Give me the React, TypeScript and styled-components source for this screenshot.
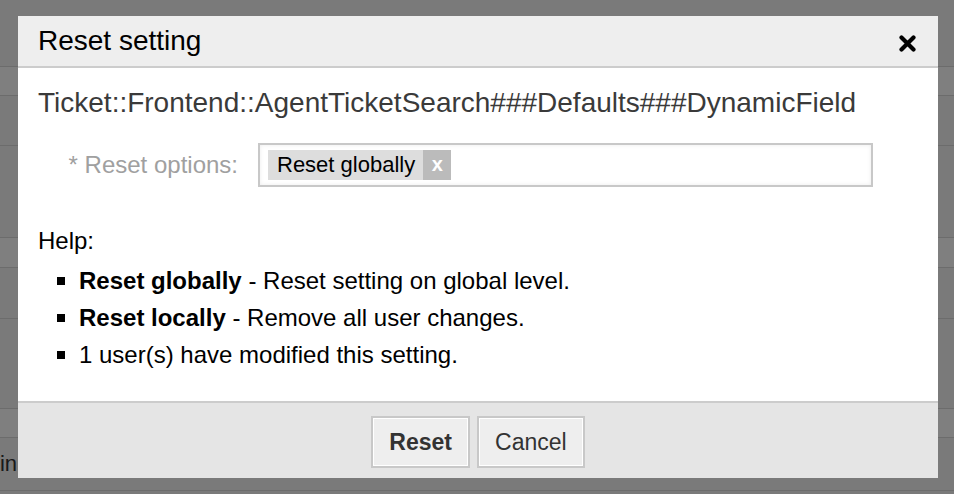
import React from 'react'
import styled, { createGlobalStyle } from 'styled-components'

const GlobalStyle = createGlobalStyle`
   html, body {
      margin: 0;
      padding: 0;
   }
   body {
      font-family: "Liberation Sans", Arial, Helvetica, sans-serif;
      background: #f4f4f4;
      overflow: hidden;
   }
`

// page behind the modal
export const Page = styled.div`
   display: flex;
   flex-flow: column;
   height: 100vh;
   background: #f4f4f4;
`
export const PageRow = styled.div<{ $h: number; $band?: boolean }>`
   display: flex;
   align-items: center;
   height: ${p => p.$h}px;
   flex-shrink: 0;
   background: ${p => (p.$band ? '#ffffff' : '#f4f4f4')};
   border-bottom: 1px solid #d8d8d8;
   box-sizing: border-box;
`
export const CutText = styled.div`
   display: flex;
   justify-content: flex-end;
   width: 17px;
   overflow: hidden;
   white-space: nowrap;
   font-size: 22px;
   color: #333;
`
export const Overlay = styled.div`
   position: fixed;
   inset: 0;
   background: rgba(0, 0, 0, 0.5);
`

// modal
export const Dialog = styled.div`
   position: fixed;
   left: 18px;
   top: 16px;
   width: 920px;
   background: #fff;
   display: flex;
   flex-flow: column;
`
export const Header = styled.div`
   display: flex;
   align-items: center;
   justify-content: space-between;
   height: 50px;
   padding: 0 22px 0 20px;
   background: #eeeeee;
   border-bottom: 2px solid #cccccc;
`
export const Title = styled.h1`
   margin: 0;
   font-size: 28px;
   font-weight: normal;
   color: #000;
`
export const CloseButton = styled.button`
   display: flex;
   padding: 0;
   margin-top: 4px;
   border: 0;
   background: none;
   cursor: pointer;
`
export const Content = styled.div`
   display: flex;
   flex-flow: column;
   padding: 18px 20px 28px;
`
export const SettingName = styled.div`
   font-size: 28px;
   line-height: 34px;
   color: #3a3a3a;
`
export const FieldRow = styled.div`
   display: flex;
   align-items: center;
   gap: 20px;
   margin-top: 23px;
`
export const Label = styled.label`
   width: 200px;
   text-align: right;
   font-size: 24px;
   color: #a0a0a0;
`
export const TagInput = styled.div`
   display: flex;
   align-items: center;
   width: 615px;
   height: 44px;
   box-sizing: border-box;
   padding: 0 8px;
   border: 2px solid #c8c8c8;
   box-shadow: inset 0 0 4px rgba(0, 0, 0, 0.08);
   background: #fff;
`
export const Tag = styled.span`
   display: flex;
   align-items: stretch;
   height: 30px;
   background: #dddddd;
   font-size: 22px;
   color: #000;
`
export const TagLabel = styled.span`
   display: flex;
   align-items: center;
   padding: 0 8px 0 9px;
`
export const TagRemove = styled.span`
   display: flex;
   align-items: center;
   justify-content: center;
   width: 28px;
   background: #bbbbbb;
   color: #fff;
   font-weight: bold;
   font-size: 20px;
   padding-bottom: 2px;
   box-sizing: border-box;
`
export const HelpTitle = styled.div`
   margin-top: 39px;
   font-size: 24px;
   line-height: 30px;
   color: #000;
`
export const HelpList = styled.ul`
   list-style: none;
   margin: 6px 0 0 19px;
   padding: 0;
`
export const HelpItem = styled.li`
   display: flex;
   align-items: center;
   height: 37px;
   font-size: 24px;
   color: #000;
   white-space: pre;
   &::before {
      content: '';
      width: 8px;
      height: 8px;
      margin-right: 14px;
      background: #000;
      flex-shrink: 0;
   }
`
export const Footer = styled.div`
   display: flex;
   justify-content: center;
   gap: 7px;
   padding: 13px 0 10px;
   background: #e5e5e5;
   border-top: 2px solid #cccccc;
`
export const Button = styled.button<{ $primary?: boolean }>`
   height: 52px;
   padding: 0 16px;
   border: 2px solid #c8c8c8;
   box-shadow: inset 0 0 0 1px #fff;
   background: #eeeeee;
   font-family: inherit;
   font-size: 23px;
   font-weight: ${p => (p.$primary ? 'bold' : 'normal')};
   color: #333;
   cursor: pointer;
`

const CloseIcon = () => (
   <svg width="17" height="17" viewBox="0 0 17 17">
      <path d="M2.5 2.5 L14.5 14.5 M14.5 2.5 L2.5 14.5" stroke="#000" strokeWidth="4.2" strokeLinecap="round" />
   </svg>
)

const background: Array<{ h: number; band?: boolean; text?: string }> = [
   { h: 67 },
   { h: 29, band: true },
   { h: 50 },
   { h: 92 },
   { h: 30, band: true },
   { h: 51 },
   { h: 90 },
   { h: 29, band: true },
   { h: 53, text: 'Admin' },
]

const App: React.FC = () => {
   return (
      <>
         <GlobalStyle />
         <Page>
            {background.map((row, i) => (
               <PageRow key={i} $h={row.h} $band={row.band}>
                  {row.text && <CutText>{row.text}</CutText>}
               </PageRow>
            ))}
         </Page>
         <Overlay />

         <Dialog>
            <Header>
               <Title>Reset setting</Title>
               <CloseButton aria-label='close'>
                  <CloseIcon />
               </CloseButton>
            </Header>

            <Content>
               <SettingName>Ticket::Frontend::AgentTicketSearch###Defaults###DynamicField</SettingName>

               <FieldRow>
                  <Label>* Reset options:</Label>
                  <TagInput>
                     <Tag>
                        <TagLabel>Reset globally</TagLabel>
                        <TagRemove>x</TagRemove>
                     </Tag>
                  </TagInput>
               </FieldRow>

               <HelpTitle>Help:</HelpTitle>
               <HelpList>
                  <HelpItem><b>Reset globally</b> - Reset setting on global level.</HelpItem>
                  <HelpItem><b>Reset locally</b> - Remove all user changes.</HelpItem>
                  <HelpItem>1 user(s) have modified this setting.</HelpItem>
               </HelpList>
            </Content>

            <Footer>
               <Button $primary>Reset</Button>
               <Button>Cancel</Button>
            </Footer>
         </Dialog>
      </>
   )
}
export default App
